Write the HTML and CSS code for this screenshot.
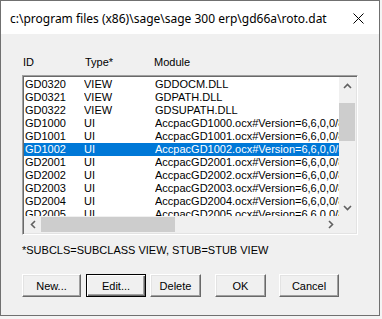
FILE: index.html
```html
<!DOCTYPE html>
<html lang="en">
<head>
  <meta charset="UTF-8">
  <title>roto.dat</title>
  <link rel="stylesheet" href="styles.css">
</head>
<body>
  <div class="window">
    <div class="titlebar">
      <span class="title">c:\program files (x86)\sage\sage 300 erp\gd66a\roto.dat</span>
      <svg class="close" width="11" height="11" viewBox="0 0 11 11">
        <path d="M0.5 0.5 L10.5 10.5 M10.5 0.5 L0.5 10.5" stroke="#000" stroke-width="1" fill="none"/>
      </svg>
    </div>

    <div class="dialog">
      <div class="head">
        <span>ID</span>
        <span>Type*</span>
        <span>Module</span>
      </div>

      <div class="listbox">
        <div class="rows">
          <div class="row"><span>GD0320</span><span>VIEW</span><span>GDDOCM.DLL</span></div>
          <div class="row"><span>GD0321</span><span>VIEW</span><span>GDPATH.DLL</span></div>
          <div class="row"><span>GD0322</span><span>VIEW</span><span>GDSUPATH.DLL</span></div>
          <div class="row"><span>GD1000</span><span>UI</span><span>AccpacGD1000.ocx#Version=6,6,0,0/8</span></div>
          <div class="row"><span>GD1001</span><span>UI</span><span>AccpacGD1001.ocx#Version=6,6,0,0/8</span></div>
          <div class="row selected"><span>GD1002</span><span>UI</span><span>AccpacGD1002.ocx#Version=6,6,0,0/8</span></div>
          <div class="row"><span>GD2001</span><span>UI</span><span>AccpacGD2001.ocx#Version=6,6,0,0/8</span></div>
          <div class="row"><span>GD2002</span><span>UI</span><span>AccpacGD2002.ocx#Version=6,6,0,0/8</span></div>
          <div class="row"><span>GD2003</span><span>UI</span><span>AccpacGD2003.ocx#Version=6,6,0,0/8</span></div>
          <div class="row"><span>GD2004</span><span>UI</span><span>AccpacGD2004.ocx#Version=6,6,0,0/8</span></div>
          <div class="row"><span>GD2005</span><span>UI</span><span>AccpacGD2005.ocx#Version=6,6,0,0/8</span></div>
        </div>

        <div class="vscroll">
          <div class="arrow">
            <svg width="9" height="6" viewBox="0 0 9 6"><polyline points="1,5 4.5,1.5 8,5" stroke="#606060" stroke-width="1.6" fill="none"/></svg>
          </div>
          <div class="track"><div class="vthumb"></div></div>
          <div class="arrow">
            <svg width="9" height="6" viewBox="0 0 9 6"><polyline points="1,1 4.5,4.5 8,1" stroke="#606060" stroke-width="1.6" fill="none"/></svg>
          </div>
        </div>

        <div class="hscroll">
          <div class="arrow">
            <svg width="6" height="9" viewBox="0 0 6 9"><polyline points="5,1 1.5,4.5 5,8" stroke="#606060" stroke-width="1.6" fill="none"/></svg>
          </div>
          <div class="track"><div class="hthumb"></div></div>
          <div class="arrow">
            <svg width="6" height="9" viewBox="0 0 6 9"><polyline points="1,1 4.5,4.5 1,8" stroke="#606060" stroke-width="1.6" fill="none"/></svg>
          </div>
        </div>

        <div class="corner"></div>
      </div>

      <p class="note">*SUBCLS=SUBCLASS VIEW, STUB=STUB VIEW</p>

      <div class="buttons">
        <button class="btn btn-new">New...</button>
        <button class="btn btn-edit default">Edit...</button>
        <button class="btn btn-delete">Delete</button>
        <button class="btn btn-ok">OK</button>
        <button class="btn btn-cancel">Cancel</button>
      </div>
    </div>
  </div>
</body>
</html>
```

FILE: styles.css
```css
* {
  margin: 0;
  padding: 0;
  box-sizing: border-box;
}

body {
  width: 382px;
  height: 319px;
  overflow: hidden;
  background: #f4f4f4;
  font-family: "Liberation Sans", Arial, sans-serif;
  font-size: 11px;
  color: #000;
}

.window {
  width: 380px;
  height: 316px;
  border: 1px solid #707070;
  background: #f0f0f0;
  display: flex;
  flex-direction: column;
}

/* Title bar */
.titlebar {
  height: 33px;
  background: #fff;
  display: flex;
  align-items: center;
  justify-content: space-between;
  padding: 1px 15px 0 9px;
}

.title {
  font-family: "Noto Sans", "Liberation Sans", sans-serif;
  font-size: 12px;
}

.close {
  display: block;
}

/* Dialog body */
.dialog {
  padding: 22px 21px 0 21px;
}

.head {
  display: grid;
  grid-template-columns: 62px 69px 1fr;
  line-height: 13px;
  padding-left: 1px;
}

.listbox {
  margin-top: 6px;
  height: 160px;
  display: grid;
  grid-template-columns: 1fr 17px;
  grid-template-rows: 1fr 17px;
  background: #fff;
  border-style: solid;
  border-width: 1px;
  border-color: #a0a0a0 #fff #fff #a0a0a0;
  box-shadow: inset 1px 1px #696969, inset -1px -1px #e3e3e3;
  padding: 1px;
}

.rows {
  overflow: hidden;
  padding-top: 1px;
}

.row {
  display: grid;
  grid-template-columns: 59px 71px 1fr;
  height: 13px;
  line-height: 13px;
  padding-left: 1px;
  white-space: nowrap;
}

.row span {
  overflow: hidden;
}

.row.selected {
  background: #0078d7;
  color: #fff;
}

/* Scroll bars */
.vscroll {
  display: flex;
  flex-direction: column;
  background: #f0f0f0;
}

.hscroll {
  display: flex;
  background: #f0f0f0;
}

.arrow {
  width: 17px;
  height: 17px;
  flex: none;
  display: flex;
  align-items: center;
  justify-content: center;
}

.arrow svg {
  display: block;
}

.track {
  flex: 1;
}

.vthumb {
  margin-top: 9px;
  width: 16px;
  height: 38px;
  background: #cdcdcd;
}

.hthumb {
  margin-top: 1px;
  width: 134px;
  height: 15px;
  background: #cdcdcd;
}

.corner {
  background: #f0f0f0;
}

.note {
  margin-top: 9px;
  line-height: 13px;
  padding-left: 0;
}

/* Buttons */
.buttons {
  display: flex;
  margin-top: 17px;
}

.btn {
  height: 23px;
  font-family: "Liberation Sans", Arial, sans-serif;
  font-size: 11px;
  color: #000;
  background: #f0f0f0;
  border-style: solid;
  border-width: 1px;
  border-color: #fff #696969 #696969 #fff;
  box-shadow: inset -1px -1px #a0a0a0, inset 1px 1px #e3e3e3;
}

.btn.default {
  border-color: #000;
  box-shadow: inset 1px 1px #fff, inset -1px -1px #696969, inset -2px -2px #a0a0a0;
}

.btn-new { width: 59px; }
.btn-edit { width: 60px; margin-left: 5px; }
.btn-delete { width: 51px; margin-left: 4px; }
.btn-ok { width: 51px; margin-left: 14px; }
.btn-cancel { width: 60px; margin-left: 13px; }
```
